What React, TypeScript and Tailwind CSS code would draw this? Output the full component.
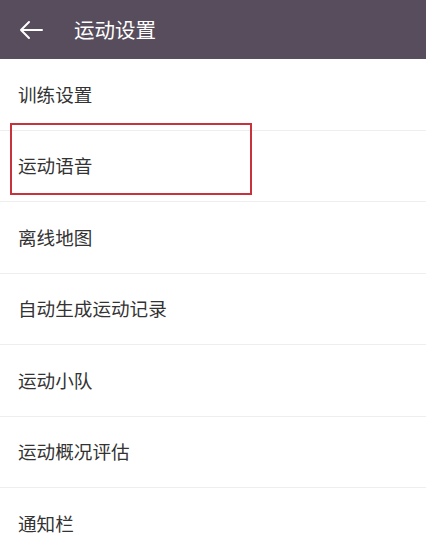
import React from 'react';

const items = ['训练设置', '运动语音', '离线地图', '自动生成运动记录', '运动小队', '运动概况评估', '通知栏'];

export default function App() {
  return (
    <div className="relative w-[426px] h-[547px] overflow-hidden bg-white font-['Noto_Sans_CJK_SC',sans-serif]">
      {/* Header */}
      <header className="flex h-[59px] items-center bg-[#574d5c] pl-[19px]">
        <svg width="24" height="20" viewBox="0 0 24 20" className="shrink-0">
          <path d="M23 10H2M10 2L2 10L10 18" fill="none" stroke="#fff" strokeWidth="2" strokeLinecap="round" strokeLinejoin="round" />
        </svg>
        <h1 className="ml-[31px] text-[20.5px] leading-none text-white">运动设置</h1>
      </header>

      {/* Settings list */}
      <ul>
        {items.map((label, i) => (
          <li
            key={label}
            className={`flex h-[71.5px] items-center pl-[18px] ${i < items.length - 1 ? 'border-b border-[#eeeeee]' : ''}`}
          >
            <span className="text-[18.6px] leading-none text-[#333333]">{label}</span>
          </li>
        ))}
      </ul>

      {/* Highlight box */}
      <div className="pointer-events-none absolute left-[10px] top-[123px] h-[72px] w-[242px] border-[2.5px] border-[#c8323c]" />
    </div>
  );
}
